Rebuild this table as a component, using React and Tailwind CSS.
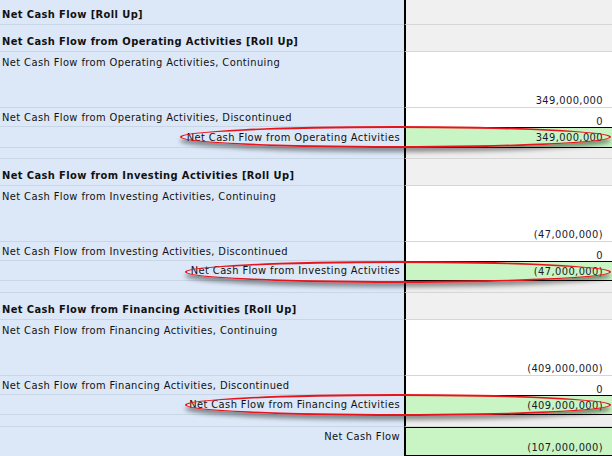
import React from "react";

const FONT = "font-['DejaVu_Sans_Condensed','DejaVu_Sans',sans-serif] tracking-[0.4px]";

function HeaderRow({ h, label }) {
  return (
    <div className={`flex ${h}`}>
      <div className="w-[404px] bg-[#dce8f7] border-b border-[#c9d6e6] flex items-end pl-[2px] pb-[4px] font-bold text-[11px] text-[#111]">
        {label}
      </div>
      <div className="flex-1 bg-[#f0f0f0] border-l-2 border-black border-b border-b-[#d6d6d6]" />
    </div>
  );
}

function ContRow({ label, value }) {
  return (
    <div className="flex h-[56px]">
      <div className="w-[404px] bg-[#dce8f7] border-b border-[#c9d6e6] pl-[2px] pt-[5px] text-[11px] text-[#111]">
        {label}
      </div>
      <div className="flex-1 bg-white border-l-2 border-black border-b border-b-[#d6d6d6] flex items-end justify-end pr-[9px] pb-[1px] text-[11px] text-[#1a1a2a]">
        {value}
      </div>
    </div>
  );
}

function DiscRow({ label }) {
  return (
    <div className="flex h-[19px]">
      <div className="w-[404px] bg-[#dce8f7] border-b border-[#c9d6e6] pl-[2px] flex items-center text-[11px] text-[#111]">
        {label}
      </div>
      <div className="flex-1 bg-white border-l-2 border-black flex items-end justify-end pr-[9px] text-[11px] text-[#1a1a2a]">
        0
      </div>
    </div>
  );
}

function TotalRow({ h, label, value }) {
  return (
    <div className={`flex ${h}`}>
      <div className="w-[404px] bg-[#dce8f7] border-b border-[#c9d6e6] flex items-center justify-end pr-[4px] text-[11px] text-[#111]">
        {label}
      </div>
      <div className="flex-1 bg-[#c8f5c3] border-l-2 border-black border-y border-y-black flex items-center justify-end pr-[9px] text-[11px] text-[#1a1a2a]">
        {value}
      </div>
    </div>
  );
}

function BlankRow({ h }) {
  return (
    <div className={`flex ${h}`}>
      <div className="w-[404px] bg-[#dce8f7] border-b border-[#c9d6e6]" />
      <div className="flex-1 bg-[#eeeeee] border-l-2 border-black border-b border-b-[#d6d6d6]" />
    </div>
  );
}

function Ellipse({ pos }) {
  return (
    <div
      className={`absolute ${pos} rounded-[50%] border-2 border-[#e8141c] shadow-[0_4px_4px_rgba(0,0,0,0.4)] pointer-events-none`}
    />
  );
}

export default function App() {
  return (
    <div className={`relative w-[612px] h-[456px] overflow-hidden bg-white ${FONT} leading-none`}>
      <HeaderRow h="h-[25px]" label="Net Cash Flow [Roll Up]" />
      <HeaderRow h="h-[27px]" label="Net Cash Flow from Operating Activities [Roll Up]" />
      <ContRow label="Net Cash Flow from Operating Activities, Continuing" value="349,000,000" />
      <DiscRow label="Net Cash Flow from Operating Activities, Discontinued" />
      <TotalRow h="h-[21px]" label="Net Cash Flow from Operating Activities" value="349,000,000" />
      <BlankRow h="h-[11px]" />

      <HeaderRow h="h-[27px]" label="Net Cash Flow from Investing Activities [Roll Up]" />
      <ContRow label="Net Cash Flow from Investing Activities, Continuing" value="(47,000,000)" />
      <DiscRow label="Net Cash Flow from Investing Activities, Discontinued" />
      <TotalRow h="h-[20px]" label="Net Cash Flow from Investing Activities" value="(47,000,000)" />
      <BlankRow h="h-[12px]" />

      <HeaderRow h="h-[27px]" label="Net Cash Flow from Financing Activities [Roll Up]" />
      <ContRow label="Net Cash Flow from Financing Activities, Continuing" value="(409,000,000)" />
      <DiscRow label="Net Cash Flow from Financing Activities, Discontinued" />
      <TotalRow h="h-[20px]" label="Net Cash Flow from Financing Activities" value="(409,000,000)" />
      <BlankRow h="h-[12px]" />

      <div className="flex h-[29px]">
        <div className="w-[404px] bg-[#dce8f7] flex justify-end pr-[4px] pt-[4px] text-[11px] text-[#111]">
          Net Cash Flow
        </div>
        <div className="flex-1 bg-[#c8f5c3] border-l-2 border-black border-y border-y-black flex items-end justify-end pr-[9px] pb-[2px] text-[11px] text-[#1a1a2a]">
          (107,000,000)
        </div>
      </div>

      <Ellipse pos="left-[180px] top-[126px] w-[431px] h-[22px]" />
      <Ellipse pos="left-[185px] top-[261px] w-[426px] h-[22px]" />
      <Ellipse pos="left-[185px] top-[394px] w-[426px] h-[22px]" />
    </div>
  );
}
